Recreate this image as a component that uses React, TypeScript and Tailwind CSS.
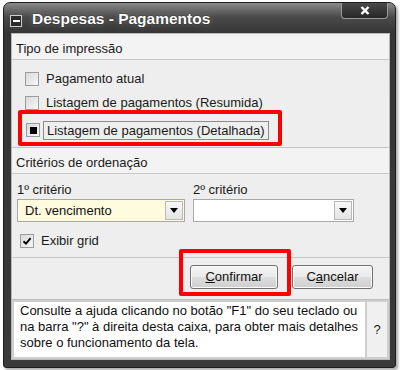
import type { ReactNode } from 'react';

function CheckBox({ mark }: { mark?: 'check' | 'square' }) {
  return (
    <span className="flex h-[14px] w-[14px] shrink-0 items-center justify-center border border-[#9c9c9c] bg-[linear-gradient(135deg,#d9d9d9,#f7f7f7)]">
      {mark === 'square' && <span className="h-[7px] w-[7px] bg-black" />}
      {mark === 'check' && (
        <svg viewBox="0 0 10 10" className="h-[10px] w-[10px]">
          <path d="M1.5 5.2 L4 7.6 L8.6 2.2" fill="none" stroke="#000" strokeWidth="1.9" />
        </svg>
      )}
    </span>
  );
}

function Combo({ value, bg }: { value?: string; bg: string }) {
  return (
    <div className={`flex h-[23px] items-center border border-[#a9a9a9] p-[1px] ${bg}`}>
      <span className="flex-1 pl-[6px] text-[13px] text-[#111]">{value}</span>
      <span className="flex h-[19px] w-[18px] items-center justify-center border border-[#b8b8b8] bg-[linear-gradient(#f7f7f7,#e4e4e4)]">
        <svg viewBox="0 0 8 5" className="h-[5px] w-[8px]">
          <path d="M0 0 H8 L4 5 Z" fill="#000" />
        </svg>
      </span>
    </div>
  );
}

function Header({ children }: { children: ReactNode }) {
  return (
    <div className="flex h-[26px] items-center border-b border-[#c9c9c9] bg-[#f3f3f3] pl-[4px] pt-[4px] text-[13px] text-[#1a1a1a]">
      {children}
    </div>
  );
}

function Button({ children, w }: { children: ReactNode; w: string }) {
  return (
    <button
      className={`flex h-[24px] ${w} items-center justify-center rounded-[3px] border border-[#707070] bg-[linear-gradient(#f4f4f4_0%,#ebebeb_48%,#dddddd_52%,#cfcfcf_100%)] text-[13px] text-[#111] shadow-[inset_0_0_0_1px_#fbfbfb]`}
    >
      {children}
    </button>
  );
}

export default function App() {
  return (
    <div className="h-[370px] w-[400px] bg-white pl-[3px] pt-[2px] font-['Liberation_Sans',Arial,sans-serif]">
      <div className="flex h-[366px] w-[393px] flex-col rounded-t-[7px] rounded-b-[3px] border border-[#1e1e1e] bg-[linear-gradient(#8a8a8a_0px,#4a4a4a_14px,#353535_31px,#3a3a3a_100%)] shadow-[2px_2px_3px_rgba(0,0,0,0.35)]">
        {/* title bar */}
        <div className="flex h-[30px] shrink-0 items-start">
          <span className="ml-[6px] mt-[12px] flex h-[12px] w-[12px] items-center justify-center border border-[#cfcfcf] bg-[#2a2a2a]">
            <span className="h-[2px] w-[7px] bg-white" />
          </span>
          <span className="ml-[10px] mt-[6px] text-[15.5px] font-bold leading-[20px] text-white [text-shadow:0_0_2px_#000,0_0_4px_rgba(255,255,255,0.35)]">
            Despesas - Pagamentos
          </span>
          <span className="ml-auto mr-[7px] flex h-[16px] w-[47px] items-center justify-center rounded-b-[4px] border border-t-0 border-[#9a9a9a] bg-[linear-gradient(#4a4a4a,#262626)]">
            <svg viewBox="0 0 10 9" className="h-[9px] w-[10px]">
              <path d="M1.5 1 L8.5 8 M8.5 1 L1.5 8" stroke="#fff" strokeWidth="2.4" />
            </svg>
          </span>
        </div>

        {/* client */}
        <div className="relative ml-[7px] mr-[5px] flex flex-1 flex-col border border-[#b9b9b9] bg-[#eeeeee]">
          <Header>Tipo de impressão</Header>
          <div className="flex h-[87px] flex-col pl-[13px] pt-[9px] text-[13px] text-[#1a1a1a]">
            <div className="flex h-[20px] items-center gap-[7px]">
              <CheckBox />
              <span>Pagamento atual</span>
            </div>
            <div className="mt-[4px] flex h-[20px] items-center gap-[7px]">
              <CheckBox />
              <span>Listagem de pagamentos (Resumida)</span>
            </div>
            <div className="mt-[7px] flex h-[20px] items-center gap-[3px] pl-[1px]">
              <CheckBox mark="square" />
              <span className="border border-[#8c8c8c] px-[3px] leading-[17px]">Listagem de pagamentos (Detalhada)</span>
            </div>
          </div>

          <div className="border-t border-[#c4c4c4]" />
          <Header>Critérios de ordenação</Header>
          <div className="flex h-[83px] flex-col pl-[5px] pt-[8px] text-[13px] text-[#1a1a1a]">
            <div className="flex gap-[8px]">
              <div className="flex w-[168px] flex-col gap-[1px]">
                <span className="h-[16px] leading-[16px]">1º critério</span>
                <Combo value="Dt. vencimento" bg="bg-[#fffbde]" />
              </div>
              <div className="flex w-[161px] flex-col gap-[1px]">
                <span className="h-[16px] leading-[16px]">2º critério</span>
                <Combo bg="bg-white" />
              </div>
            </div>
            <div className="ml-[3px] mt-[11px] flex h-[16px] items-center gap-[7px]">
              <CheckBox mark="check" />
              <span>Exibir grid</span>
            </div>
          </div>

          <div className="flex h-[42px] items-start justify-end gap-[14px] border-t border-[#c4c4c4] pr-[16px] pt-[7px]">
            <Button w="w-[88px]">
              <span>
                <span className="underline">C</span>onfirmar
              </span>
            </Button>
            <Button w="w-[81px]">
              <span>
                C<span className="underline">a</span>ncelar
              </span>
            </Button>
          </div>

          {/* help */}
          <div className="flex flex-1 border-t border-[#bdbdbd]">
            <div className="flex-1 border-2 border-[#cfcfcf] bg-white pl-[6px] pt-[1px] text-[13px] leading-[16px] text-[#0f0f0f]">
              <p>Consulte a ajuda clicando no botão "F1" do seu teclado ou</p>
              <p>na barra "?" à direita desta caixa, para obter mais detalhes</p>
              <p>sobre o funcionamento da tela.</p>
            </div>
            <div className="flex w-[22px] items-center justify-center border-2 border-l-0 border-[#cfcfcf] bg-[#f0f0f0] text-[13px] text-[#1a1a1a]">
              ?
            </div>
          </div>

          {/* red highlight marks */}
          <div className="absolute left-[6px] top-[76px] h-[36px] w-[264px] rounded-[2px] border-4 border-[#ff0000]" />
          <div className="absolute left-[167px] top-[215px] h-[47px] w-[112px] rounded-[2px] border-4 border-[#ff0000]" />
        </div>
        <div className="h-[7px] shrink-0" />
      </div>
    </div>
  );
}
